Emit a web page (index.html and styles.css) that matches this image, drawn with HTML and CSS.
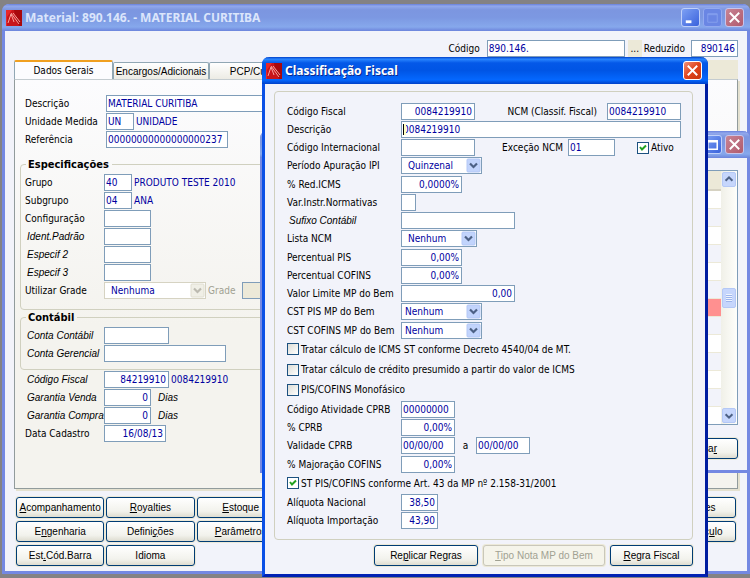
FILE: index.html
```html
<!DOCTYPE html>
<html lang="pt-BR">
<head>
  <meta charset="UTF-8" />
  <meta name="viewport" content="width=device-width, initial-scale=1.0" />
  <title>Material: 890.146. - MATERIAL CURITIBA</title>
  <link rel="stylesheet" href="styles.css">
</head>
<body>

<svg class="defs" width="0" height="0">
  <symbol id="logo" viewBox="0 0 16 16">
    <rect width="16" height="16" fill="#c8141a"/>
    <path d="M0 0h6L1 7v9H0z" fill="#e8262a"/>
    <path d="M8 0h8v16h-3L9 5z" fill="#a8080c"/>
    <path d="M2 13L5 4l3 8M5 3l8 11M7 3l7 9" stroke="#f7a09a" stroke-width="1" fill="none"/>
  </symbol>
  <symbol id="close" viewBox="0 0 18 18">
    <path d="M4 4l10 10M14 4L4 14" stroke="#fff" stroke-width="2" fill="none"/>
  </symbol>
</svg>

<!-- Material -->
<div class="window main-window inactive">
  <div class="titlebar">
    <svg class="logo"><use href="#logo"/></svg>
    <h1>Material: 890.146. - MATERIAL CURITIBA</h1>
    <button class="win-btn" aria-label="Minimizar"><svg viewBox="0 0 18 18"><path d="M4 12h6v3H4z" fill="#fff"/></svg></button>
    <button class="win-btn dim" aria-label="Maximizar"><svg viewBox="0 0 18 18"><path d="M4 5h10v9H4zM4 6h10" stroke="#86a0ee" fill="none"/></svg></button>
    <button class="win-btn close" aria-label="Fechar"><svg><use href="#close"/></svg></button>
  </div>

  <div class="main-body">
    <div class="search">
      <label for="codigo">Código</label>
      <input type="text" id="codigo" class="w-code" value="890.146.">
      <button class="dots">...</button>
      <label for="reduzido">Reduzido</label>
      <input type="text" id="reduzido" class="w-short right" value="890146">
    </div>

    <div class="tabs">
      <button class="tab active">Dados Gerais</button>
      <button class="tab">Encargos/Adicionais</button>
      <button class="tab">PCP/Custos</button>
    </div>

    <div class="panel">
      <div class="rows general">
        <div class="row"><label for="descricao">Descrição</label><input type="text" id="descricao" class="w-280" value="MATERIAL CURITIBA"></div>
        <div class="row"><label for="unidade">Unidade Medida</label><input type="text" id="unidade" class="w-28" value="UN"><span class="value">UNIDADE</span></div>
        <div class="row"><label for="referencia">Referência</label><input type="text" id="referencia" class="w-122" value="00000000000000000237"></div>
      </div>

      <fieldset>
        <legend>Especificações</legend>
        <div class="row"><label for="grupo">Grupo</label><input type="text" id="grupo" class="w-28" value="40"><span class="value">PRODUTO TESTE 2010</span></div>
        <div class="row"><label for="subgrupo">Subgrupo</label><input type="text" id="subgrupo" class="w-28" value="04"><span class="value">ANA</span></div>
        <div class="row"><label for="config">Configuração</label><input type="text" id="config" class="w-47"></div>
        <div class="row"><label for="ident" class="optional">Ident.Padrão</label><input type="text" id="ident" class="w-47"></div>
        <div class="row"><label for="esp2" class="optional">Especif 2</label><input type="text" id="esp2" class="w-47"></div>
        <div class="row"><label for="esp3" class="optional">Especif 3</label><input type="text" id="esp3" class="w-47"></div>
        <div class="row">
          <label for="utilizar">Utilizar Grade</label>
          <select id="utilizar" class="w-102" disabled><option>Nenhuma</option></select>
          <label for="grade" class="grade">Grade</label>
          <input type="text" id="grade" class="w-47" disabled>
        </div>
      </fieldset>

      <fieldset>
        <legend>Contábil</legend>
        <div class="row"><label for="conta" class="optional">Conta Contábil</label><input type="text" id="conta" class="w-65"></div>
        <div class="row"><label for="gerencial" class="optional">Conta Gerencial</label><input type="text" id="gerencial" class="w-122"></div>
      </fieldset>

      <div class="rows">
        <div class="row"><label for="fiscal" class="optional">Código Fiscal</label><input type="text" id="fiscal" class="w-65 right" value="84219910"><span class="value">0084219910</span></div>
        <div class="row"><label for="venda" class="optional">Garantia Venda</label><input type="text" id="venda" class="w-47 right" value="0"><span class="unit">Dias</span></div>
        <div class="row"><label for="compra" class="optional">Garantia Compra</label><input type="text" id="compra" class="w-47 right" value="0"><span class="unit">Dias</span></div>
        <div class="row"><label for="cadastro">Data Cadastro</label><input type="text" id="cadastro" class="w-62 right" value="16/08/13"></div>
      </div>
    </div>

    <div class="actions">
      <button class="btn"><u>A</u>companhamento</button>
      <button class="btn"><u>R</u>oyalties</button>
      <button class="btn"><u>E</u>stoque</button>
      <button class="btn last">Restrições</button>
      <button class="btn">E<u>n</u>genharia</button>
      <button class="btn">Defini<u>ç</u>ões</button>
      <button class="btn"><u>P</u>arâmetros</button>
      <button class="btn last">Mem. Cálc<u>u</u>lo</button>
      <button class="btn">Est<u>.</u>Cód.Barra</button>
      <button class="btn">Idioma</button>
    </div>
  </div>
</div>

<!-- Lista -->
<div class="window list-window inactive">
  <div class="titlebar">
    <button class="win-btn" aria-label="Maximizar"><svg viewBox="0 0 18 18"><path d="M4 5h10v9H4zM4 6h10" stroke="#fff" stroke-width="1.6" fill="none"/></svg></button>
    <button class="win-btn close" aria-label="Fechar"><svg><use href="#close"/></svg></button>
  </div>
  <div class="list-body">
    <div class="list">
      <table>
        <thead><tr><th></th></tr></thead>
        <tbody>
          <tr><td></td></tr>
          <tr><td></td></tr>
          <tr><td></td></tr>
          <tr><td></td></tr>
          <tr><td></td></tr>
          <tr><td></td></tr>
          <tr class="selected"><td></td></tr>
          <tr><td></td></tr>
          <tr><td></td></tr>
          <tr><td></td></tr>
          <tr><td></td></tr>
          <tr><td></td></tr>
          <tr><td></td></tr>
        </tbody>
      </table>
      <div class="scrollbar">
        <button aria-label="Subir"><svg viewBox="0 0 14 15"><path d="M3 9l4-4 4 4" stroke="#4d6185" stroke-width="2.4" fill="none"/></svg></button>
        <div class="thumb"></div>
        <button aria-label="Descer"><svg viewBox="0 0 14 15"><path d="M3 6l4 4 4-4" stroke="#4d6185" stroke-width="2.4" fill="none"/></svg></button>
      </div>
    </div>
    <button class="btn">Cancela<u>r</u></button>
  </div>
</div>

<!-- Classificação Fiscal -->
<div class="window dialog">
  <div class="titlebar">
    <svg class="logo"><use href="#logo"/></svg>
    <h1>Classificação Fiscal</h1>
    <button class="win-btn close" aria-label="Fechar"><svg><use href="#close"/></svg></button>
  </div>

  <div class="dialog-body">
    <div class="group">
      <div class="row">
        <label for="cf">Código Fiscal</label><input type="text" id="cf" class="w-74 right" value="0084219910">
        <label for="ncm" class="side">NCM (Classif. Fiscal)</label><input type="text" id="ncm" class="w-74" value="0084219910">
      </div>
      <div class="row"><label for="desc">Descrição</label><span class="focused"><input type="text" id="desc" value="0084219910"></span></div>
      <div class="row">
        <label for="ci">Código Internacional</label><input type="text" id="ci" class="w-74">
        <label for="excecao" class="side except">Exceção NCM</label><input type="text" id="excecao" class="w-47" value="01">
        <label class="check active-check"><input type="checkbox" checked>Ativo</label>
      </div>
      <div class="row"><label for="periodo">Período Apuração IPI</label><select id="periodo" class="w-81"><option>Quinzenal</option></select></div>
      <div class="row"><label for="red">% Red.ICMS</label><input type="text" id="red" class="w-61 right" value="0,0000%"></div>
      <div class="row"><label for="var">Var.Instr.Normativas</label><input type="text" id="var" class="w-15"></div>
      <div class="row"><label for="sufixo" class="optional">Sufixo Contábil</label><input type="text" id="sufixo" class="w-114"></div>
      <div class="row"><label for="lista">Lista NCM</label><select id="lista" class="w-76"><option>Nenhum</option></select></div>
      <div class="row"><label for="pis">Percentual PIS</label><input type="text" id="pis" class="w-61 right" value="0,00%"></div>
      <div class="row"><label for="cofins">Percentual COFINS</label><input type="text" id="cofins" class="w-61 right" value="0,00%"></div>
      <div class="row"><label for="limite">Valor Limite MP do Bem</label><input type="text" id="limite" class="w-114 right" value="0,00"></div>
      <div class="row"><label for="cstpis">CST PIS MP do Bem</label><select id="cstpis" class="w-81 tight"><option>Nenhum</option></select></div>
      <div class="row"><label for="cstcofins">CST COFINS MP do Bem</label><select id="cstcofins" class="w-81 tight"><option>Nenhum</option></select></div>
      <label class="check"><input type="checkbox">Tratar cálculo de ICMS ST conforme Decreto 4540/04 de MT.</label>
      <label class="check"><input type="checkbox">Tratar cálculo de crédito presumido a partir do valor de ICMS</label>
      <label class="check"><input type="checkbox">PIS/COFINS Monofásico</label>
      <div class="row"><label for="atividade">Código Atividade CPRB</label><input type="text" id="atividade" class="w-54" value="00000000"></div>
      <div class="row"><label for="cprb">% CPRB</label><input type="text" id="cprb" class="w-54 right" value="0,00%"></div>
      <div class="row"><label for="de">Validade CPRB</label><input type="text" id="de" class="w-54" value="00/00/00"><label for="ate" class="until">a</label><input type="text" id="ate" class="w-54" value="00/00/00"></div>
      <div class="row"><label for="major">% Majoração COFINS</label><input type="text" id="major" class="w-54 right" value="0,00%"></div>
      <label class="check"><input type="checkbox" checked>ST PIS/COFINS conforme Art. 43 da MP nº 2.158-31/2001</label>
      <div class="row"><label for="nacional">Alíquota Nacional</label><input type="text" id="nacional" class="w-37 right" value="38,50"></div>
      <div class="row"><label for="importacao">Alíquota Importação</label><input type="text" id="importacao" class="w-37 right" value="43,90"></div>
    </div>

    <div class="dialog-actions">
      <button class="btn">Re<u>p</u>licar Regras</button>
      <button class="btn wide" disabled><u>T</u>ipo Nota MP do Bem</button>
      <button class="btn small"><u>R</u>egra Fiscal</button>
    </div>
  </div>
</div>

</body>
</html>
```
FILE: styles.css
```css
* {
  margin: 0;
  padding: 0;
  box-sizing: border-box;
}

body {
  height: 100vh;
  position: relative;
  overflow: hidden;
  background-color: #848284;
  font-family: "DejaVu Sans Condensed", "DejaVu Sans", sans-serif;
  font-size: 10px;
  color: #000;
}

.defs {
  position: absolute;
}

input, select, button {
  font: inherit;
}

/* windows */

.window {
  position: absolute;
  display: flex;
  flex-direction: column;
  background-color: #f2f3fa;
  border: 3px solid #0a50e6;
  border-top: none;
  border-radius: 7px 7px 0 0;
}

.window.inactive {
  border-color: #7488e2;
}

.main-window {
  top: 4px;
  right: 0;
  bottom: 4px;
  left: 2px;
}

.list-window {
  top: 131px;
  right: 0;
  left: 260px;
}

.dialog {
  top: 57px;
  right: 42px;
  bottom: 1px;
  left: 262px;
  border-right-color: #001da0;
  border-bottom-color: #0022b4;
}

.titlebar {
  flex: none;
  display: flex;
  align-items: center;
  justify-content: flex-end;
  gap: 3px;
  height: 27px;
  margin: 0 -3px;
  padding: 0 6px 0 4px;
  border-radius: 7px 7px 0 0;
  background: linear-gradient(#0040c8, #2a86ff 8%, #0458e8 22%, #0055e5 50%, #0468ff 85%, #0040c8);
}

.inactive .titlebar {
  background: linear-gradient(#6880dc, #92a8ec 8%, #7c96e0 22%, #7c98e2 50%, #86a8ec 85%, #6c84dc);
}

.logo {
  width: 16px;
  height: 16px;
}

.titlebar h1 {
  flex: 1;
  font-family: "Noto Sans", sans-serif;
  font-size: 12px;
  font-weight: 700;
  color: #fff;
  white-space: nowrap;
  text-shadow: 1px 1px #0a2a90;
}

.inactive h1 {
  color: #dbe5fb;
  text-shadow: none;
}

.win-btn {
  width: 19px;
  height: 19px;
  border: 1px solid #c0d0fa;
  border-radius: 3px;
  background: linear-gradient(135deg, #7da0f4, #3a62dc);
}

.win-btn svg {
  display: block;
  width: 17px;
  height: 17px;
}

.win-btn.dim {
  border-color: #93aaf0;
  background: #6a86e4;
}

.win-btn.close {
  border-color: #fff;
  background: linear-gradient(135deg, #f09078, #e0441c 50%, #c83810);
}

.inactive .win-btn.close {
  border-color: #c8c4ea;
  background: linear-gradient(135deg, #c88494, #b05a6e);
}

/* form controls */

input[type="text"] {
  height: 17px;
  padding: 0 1px;
  border: 1px solid #7f9db9;
  background-color: #fff;
  color: #0000a0;
}

input[type="text"].right {
  padding-right: 2px;
  text-align: right;
}

input[type="text"]:disabled {
  background-color: #ece9d8;
}

select {
  height: 17px;
  padding: 0 6px;
  border: 1px solid #7f9db9;
  border-radius: 0;
  appearance: none;
  color: #0000a0;
  background: #fff url("data:image/svg+xml,%3Csvg xmlns='http://www.w3.org/2000/svg' width='15' height='15'%3E%3Crect x='1' y='1' width='13' height='13' rx='1' fill='%23c2d4fc' stroke='%23b4c8f6'/%3E%3Cpath d='M4 5.500l3.500 3.500L11 5.500' stroke='%234d6185' stroke-width='2.200' fill='none'/%3E%3C/svg%3E") no-repeat right center;
}

select.tight {
  padding-left: 3px;
}

select:disabled {
  border-color: #d6d3c2;
  opacity: 1;
  color: #0000a0;
  background-image: url("data:image/svg+xml,%3Csvg xmlns='http://www.w3.org/2000/svg' width='15' height='15'%3E%3Crect x='1' y='1' width='13' height='13' rx='1' fill='%23f0efe6' stroke='%23e0ded0'/%3E%3Cpath d='M4 5.500l3.500 3.500L11 5.500' stroke='%23bcbab0' stroke-width='2.200' fill='none'/%3E%3C/svg%3E");
}

input[type="checkbox"] {
  width: 12px;
  height: 12px;
  margin-right: 2px;
  appearance: none;
  border: 1px solid #1c5180;
  background: linear-gradient(135deg, #dcdcd6, #fff);
}

input[type="checkbox"]:checked {
  background: #fff url("data:image/svg+xml,%3Csvg xmlns='http://www.w3.org/2000/svg' width='10' height='10'%3E%3Cpath d='M2 4l2 2.500L8 2.500' stroke='%2321a121' stroke-width='2' fill='none'/%3E%3C/svg%3E") no-repeat center;
}

.btn {
  height: 21px;
  border: 1px solid #003c74;
  border-radius: 3px;
  background: linear-gradient(#fff, #f2f2ec 70%, #dedcd0);
  box-shadow: 0 0 0 1px #ece9d8;
  font-family: "Liberation Sans", sans-serif;
  white-space: nowrap;
}

.btn:disabled {
  border-color: #c9c7ba;
  background: #f5f4ea;
  color: #a1a192;
}

.row {
  display: flex;
  align-items: center;
  height: 18px;
}

.row label, .search label {
  white-space: nowrap;
}

.row label:first-child {
  flex: none;
  width: 79px;
}

.general .row label:first-child {
  width: 81px;
}

.row .optional, .unit {
  padding-left: 2px;
  font-family: "Liberation Sans", sans-serif;
  font-style: italic;
}

.value {
  padding-left: 2px;
  color: #0000a0;
  white-space: nowrap;
}

.unit {
  padding-left: 7px;
}

.row .grade {
  padding: 0 7px 0 2px;
  color: #a1a192;
}

.w-15 { width: 15px; }
.w-28 { width: 28px; }
.w-37 { width: 37px; }
.w-47 { width: 47px; }
.w-54 { width: 54px; }
.w-61 { width: 61px; }
.w-62 { width: 62px; }
.w-65 { width: 65px; }
.w-74 { width: 74px; }
.w-76 { width: 76px; }
.w-81 { width: 81px; }
.w-102 { width: 102px; }
.w-114 { width: 114px; }
.w-122 { width: 122px; }
.w-280 { width: 280px; }

/* main window */

.main-body {
  flex: 1;
  display: flex;
  flex-direction: column;
  padding: 9px 9px 5px;
}

.search {
  display: flex;
  justify-content: flex-end;
  align-items: center;
}

.w-code {
  width: 138px;
  margin: 0 3px 0 7px;
}

.w-short {
  margin-left: 6px;
  width: 47px;
}

.dots {
  width: 14px;
  height: 17px;
  margin-right: 2px;
  border: none;
  background-color: #ece9d8;
}

.tabs {
  display: flex;
  align-items: flex-end;
  margin-top: 3px;
  background: linear-gradient(to right, #f2f3fa 50%, #ece9d8 50%);
}

.tab {
  width: 96px;
  height: 17px;
  border: 1px solid #91a7b4;
  border-bottom: none;
  border-radius: 2px 2px 0 0;
  background: linear-gradient(#fff, #ecebe4);
  font-family: "Liberation Sans", sans-serif;
}

.tab.active {
  width: 99px;
  height: 19px;
  border-top: 2px solid #f0a020;
  background: #fcfcfe;
  font-family: inherit;
}

.panel {
  flex: 1;
  padding: 14px 5px;
  border: 1px solid #919b9c;
  border-top-color: #c4ccd0;
  background: linear-gradient(#fcfcfe, #f4f3ee 60%, #f4f3ee);
  box-shadow: 2px 2px #e4e1d0;
}

.rows {
  padding-left: 5px;
}

.panel .row > :nth-child(2) {
  flex: none;
}

fieldset {
  margin-top: 9px;
  padding: 1px 5px 10px 4px;
  border: 1px solid #d0d0bf;
  border-radius: 4px;
}

fieldset + fieldset {
  margin-top: 0;
  padding-bottom: 7px;
}

legend {
  margin-left: 1px;
  padding: 0 3px 0 2px;
  font-size: 11px;
  line-height: 15px;
  font-weight: 700;
}

.actions {
  display: grid;
  grid-template-columns: repeat(8, minmax(0, 1fr));
  gap: 3px 2px;
  padding: 8px 2px 0;
}

.actions .last {
  grid-column: 8;
}

/* list window */

.list-body {
  display: flex;
  flex-direction: column;
  align-items: flex-end;
  gap: 13px;
  padding: 12px 9px 11px;
}

.list {
  display: flex;
  width: 100%;
  height: 255px;
  overflow: hidden;
  border: 1px solid #7f9db9;
  background-color: #fff;
}

.list-body .btn {
  width: 82px;
}

table {
  flex: 1;
  border-collapse: collapse;
}

th {
  height: 19px;
  background-color: #ece9d8;
  border-bottom: 2px solid #d6d2c2;
}

td {
  height: 18px;
  border-bottom: 1px solid #ece9d8;
}

tbody tr:nth-child(even) {
  background-color: #f2f3fa;
}

tbody tr.selected {
  background-color: #ff9090;
}

.scrollbar {
  display: flex;
  flex-direction: column;
  justify-content: space-between;
  width: 16px;
  padding: 1px;
  background: linear-gradient(to right, #f0f0e8, #fefefb);
}

.scrollbar button, .thumb {
  height: 15px;
  border: 1px solid #b4c8f6;
  border-radius: 2px;
  background-color: #c6d6fc;
}

.scrollbar svg {
  display: block;
  width: 12px;
  height: 13px;
}

.thumb {
  height: 20px;
  background: repeating-linear-gradient(#eef4fe 0 1px, #9cb4ec 1px 2px) no-repeat center / 6px 8px #c6d6fc;
}

/* dialog */

.dialog-body {
  flex: 1;
  display: flex;
  flex-direction: column;
  padding: 7px 12px 8px 9px;
}

.group {
  flex: 1;
  display: flex;
  flex-direction: column;
  justify-content: space-between;
  padding: 10px 11px 9px 12px;
  border: 1px solid #d0d0bf;
  border-radius: 4px;
}

.group .row label:first-child {
  width: 114px;
}

.row .side {
  flex: 1;
  padding-right: 10px;
  text-align: right;
}

.row .except {
  padding-right: 5px;
}

.focused {
  flex: 1;
  display: flex;
  position: relative;
}

.focused input {
  flex: 1;
}

/* text caret */
.focused::after {
  content: "";
  position: absolute;
  top: 3px;
  left: 2px;
  width: 2px;
  height: 11px;
  border-left: 1px solid #000;
  background-color: #ffffc0;
}

.check {
  display: flex;
  align-items: center;
  height: 20px;
  white-space: nowrap;
}

.active-check {
  width: 44px;
  margin-left: 22px;
}

.until {
  width: 21px;
  text-align: center;
}

.dialog-actions {
  display: flex;
  justify-content: flex-end;
  gap: 5px;
  padding-top: 5px;
}

.dialog-actions .btn {
  width: 104px;
}

.dialog-actions .wide {
  width: 122px;
}

.dialog-actions .small {
  width: 83px;
}
```
